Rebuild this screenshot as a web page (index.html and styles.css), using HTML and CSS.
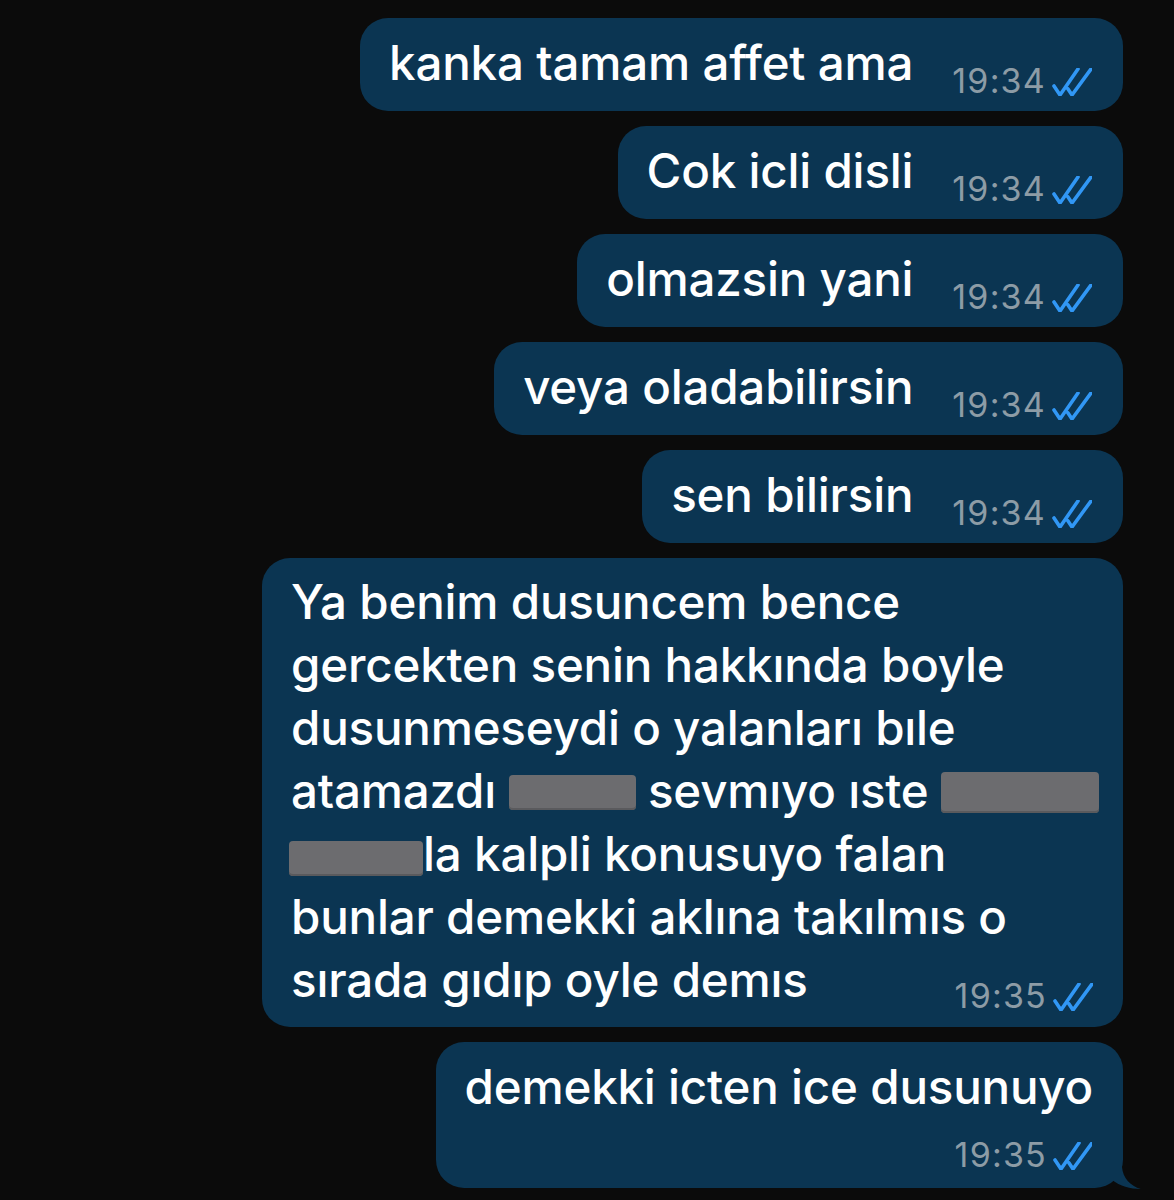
FILE: index.html
```html
<!DOCTYPE html>
<html lang="tr">
<head>
<meta charset="utf-8">
<title>Chat</title>
<link rel="stylesheet" href="styles.css">
</head>
<body>
<div class="chat">
  <div class="bubble row">
    <span class="text">kanka tamam affet ama</span>
    <span class="meta">19:34<svg class="ticks" viewBox="0 0 40 28"><path d="M2 18 L8 27 L26 1 M16 21 L20 27 L39 1"/></svg></span>
  </div>
  <div class="bubble row">
    <span class="text">Cok icli disli</span>
    <span class="meta">19:34<svg class="ticks" viewBox="0 0 40 28"><path d="M2 18 L8 27 L26 1 M16 21 L20 27 L39 1"/></svg></span>
  </div>
  <div class="bubble row">
    <span class="text">olmazsin yani</span>
    <span class="meta">19:34<svg class="ticks" viewBox="0 0 40 28"><path d="M2 18 L8 27 L26 1 M16 21 L20 27 L39 1"/></svg></span>
  </div>
  <div class="bubble row">
    <span class="text">veya oladabilirsin</span>
    <span class="meta">19:34<svg class="ticks" viewBox="0 0 40 28"><path d="M2 18 L8 27 L26 1 M16 21 L20 27 L39 1"/></svg></span>
  </div>
  <div class="bubble row">
    <span class="text">sen bilirsin</span>
    <span class="meta">19:34<svg class="ticks" viewBox="0 0 40 28"><path d="M2 18 L8 27 L26 1 M16 21 L20 27 L39 1"/></svg></span>
  </div>
  <div class="bubble long">
    <div class="para">Ya benim dusuncem bence<br>gercekten senin hakkında boyle<br>dusunmeseydi o yalanları bıle<br>atamazdı <span class="redact r1"></span> sevmıyo ıste <span class="redact r2"></span><br><span class="redact r3"></span>la kalpli konusuyo falan<br>bunlar demekki aklına takılmıs o<br>sırada gıdıp oyle demıs<span class="meta float">19:35<svg class="ticks" viewBox="0 0 40 28"><path d="M2 18 L8 27 L26 1 M16 21 L20 27 L39 1"/></svg></span></div>
  </div>
  <div class="bubble stack">
    <div class="text">demekki icten ice dusunuyo</div>
    <div class="meta block">19:35<svg class="ticks" viewBox="0 0 40 28"><path d="M2 18 L8 27 L26 1 M16 21 L20 27 L39 1"/></svg></div>
    <svg class="tail" viewBox="0 0 50 48"><path d="M0 0 L30 0 L30 25 C31 36 38 44 49 47 C38 47 28 44 20 38 C14 42 8 45 0 45 Z"/></svg>
  </div>
</div>
</body>
</html>
```

FILE: styles.css
```css
html, body {
  margin: 0;
  padding: 0;
  background: #0b0b0b;
}
body {
  width: 1174px;
  height: 1200px;
  overflow: hidden;
  font-family: Inter, "Noto Sans", "Liberation Sans", sans-serif;
  color: #ffffff;
}
.chat {
  display: flex;
  flex-direction: column;
  align-items: flex-end;
  gap: 15px;
  padding: 18px 51px 0 0;
}
.bubble {
  background: #0b3552;
  border-radius: 28px;
  position: relative;
}
.text, .para {
  font-size: 47.5px;
  font-weight: 500;
  line-height: 62px;
  letter-spacing: -0.2px;
  white-space: nowrap;
}
.row {
  display: flex;
  align-items: flex-end;
  padding: 14px 31px 17px 29px;
}
.row .meta {
  margin-left: 39px;
  margin-bottom: -3px;
}
.meta {
  font-size: 34px;
  line-height: 32px;
  font-weight: 400;
  letter-spacing: 1.2px;
  color: #8d9ca6;
  white-space: nowrap;
}
.ticks {
  width: 40px;
  height: 28px;
  margin-left: 6px;
  vertical-align: -3px;
  fill: none;
  stroke: #3197f5;
  stroke-width: 3.6;
  stroke-linecap: round;
  stroke-linejoin: round;
}
.long {
  padding: 12px 24px 15px 29px;
}
.long .para {
  line-height: 63px;
}
.meta.float {
  float: right;
  margin-top: 32px;
  margin-left: 20px;
  margin-right: 6px;
}
.redact {
  display: inline-block;
  height: 35px;
  background: #6c6c6f;
  border-radius: 4px;
  vertical-align: -2px;
  box-shadow: inset 0 -2px 0 #5a5a5d;
}
.r1 { width: 127px; }
.r2 { width: 158px; height: 41px; vertical-align: -5px; }
.r3 { width: 134px; margin-left: -2px; vertical-align: -5px; }
.stack {
  padding: 14px 30px 17px 29px;
  display: flex;
  flex-direction: column;
}
.meta.block {
  margin-top: 21px;
  text-align: right;
}
.tail {
  position: absolute;
  right: -19px;
  bottom: -2px;
  width: 50px;
  height: 48px;
  fill: #0b3552;
}
```
